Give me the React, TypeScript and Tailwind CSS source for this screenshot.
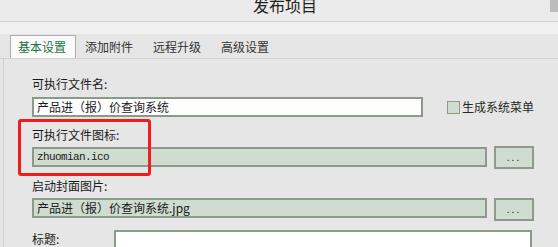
import React from 'react';

const cjk = "font-['SimSun','Noto_Sans_CJK_SC',sans-serif]";

const tabs = ['基本设置', '添加附件', '远程升级', '高级设置'];

const Browse = () => (
   <div className="w-[40px] h-[23px] shrink-0 bg-[#cfdccf] border-2 border-[#8b9a8b] flex items-center justify-center text-[10px] leading-none tracking-[2px] text-[#222] pb-[2px]">
      ...
   </div>
);

export default function App() {
   return (
      <div className={`relative w-[558px] h-[247px] overflow-hidden bg-[#e6e6e6] ${cjk}`}>
         {/* Title bar */}
         <div className="relative h-[22px] bg-[#ebebeb] border-b border-[#d4d4d4] flex justify-center">
            <span className="ml-[12px] -mt-[5px] text-[16px] leading-[20px] text-[#222]">发布项目</span>
            <div className="absolute right-0 top-0 w-[8px] h-[12px] bg-[#bcbcbc]" />
         </div>
         <div className="h-[12px] bg-[#f0f0f0]" />

         {/* Tabs */}
         <div className="h-[25px] border-b border-[#d2d2d2] flex items-end pl-[10px]">
            {tabs.map((t, i) =>
               i === 0 ? (
                  <div
                     key={t}
                     className="w-[66px] h-[23px] bg-[#fafafa] border border-b-0 border-[#adadad] flex items-center pl-[7px] text-[12px] text-[#217346]"
                  >
                     {t}
                  </div>
               ) : (
                  <div key={t} className="w-[68px] h-[23px] flex items-center pl-[9px] text-[12px] text-[#333]">
                     {t}
                  </div>
               ),
            )}
         </div>

         {/* Content */}
         <div className="ml-[3px] border-l border-[#d0d0d0] h-full pl-[28px] text-[12px] leading-4 text-[#1a1a1a]">
            <div className="pt-[17px]">可执行文件名:</div>
            <div className="mt-[5px] flex items-center">
               <div className="w-[391px] h-[20px] bg-white border-2 border-[#8b9a8b] pl-[3px] leading-[16px]">
                  产品进（报）价查询系统
               </div>
               <div className="ml-[24px] w-[13px] h-[13px] bg-[#cfdccf] border border-[#8b9a8b]" />
               <span className="ml-[2px] text-[#1e2a1e]">生成系统菜单</span>
            </div>

            <div className="mt-[10px]">可执行文件图标:</div>
            <div className="mt-[3px] flex items-start gap-[7px]">
               <div className="mt-[1px] w-[455px] h-[20px] bg-[#cfdccf] border-2 border-[#8b9a8b] pl-[3px] font-['Liberation_Mono',monospace] text-[11px] tracking-[-0.6px] leading-[16px]">
                  zhuomian.ico
               </div>
               <Browse />
            </div>

            <div className="mt-[9px]">启动封面图片:</div>
            <div className="mt-[4px] flex items-start gap-[7px]">
               <div className="w-[455px] h-[20px] bg-[#cfdccf] border-2 border-[#8b9a8b] pl-[3px] leading-[16px]">
                  产品进（报）价查询系统.jpg
               </div>
               <Browse />
            </div>

            <div className="mt-[9px] flex items-start">
               <span className="mt-[1px] w-[82px]">标题:</span>
               <div className="w-[418px] h-[30px] bg-white border-2 border-[#8b9a8b]" />
            </div>
         </div>

         {/* Annotation */}
         <div className="absolute left-[18px] top-[119px] w-[133px] h-[57px] border-[3px] border-[#f21c1c] rounded-[3px]" />
      </div>
   );
}
